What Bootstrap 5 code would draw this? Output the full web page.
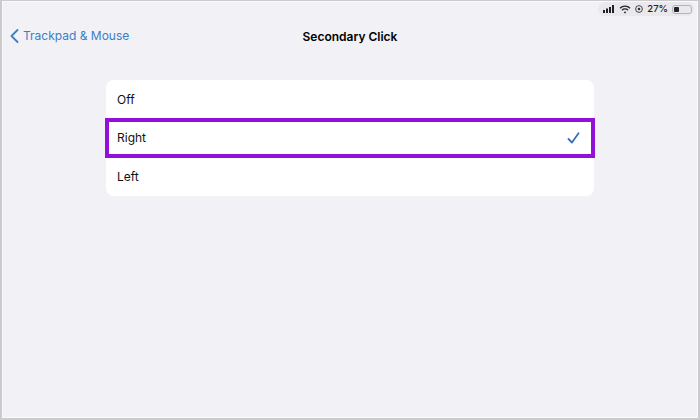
<!DOCTYPE html>
<html lang="en">
<head>
    <meta charset="UTF-8">
    <meta name="viewport" content="width=device-width, initial-scale=1.0">
    <title>Secondary Click</title>
    <link rel="stylesheet" href="https://cdn.jsdelivr.net/npm/bootstrap@5.3.0/dist/css/bootstrap.min.css">
    <style>
        html, body {
            height: 100%;
            overflow: hidden;
        }

        body {
            background: #f2f1f6;
            color: #000;
            font-family: Inter, "Liberation Sans", sans-serif;
            border: solid #cbcbcd;
            border-width: 1px 2px 2px 2px;
            box-shadow: inset 0 0 0 1px #f9f8fb;
        }

        .status-row {
            height: 15px;
            padding-right: 4px;
            font-size: 9.5px;
            font-weight: 500;
            color: #222;
        }

        .status-pill {
            background: #e9e8ec;
            border-radius: 7px;
            height: 14px;
            padding: 0 2px 0 4px;
            gap: 4px;
        }

        .top-row {
            height: 41px;
            padding: 0 8px;
        }

        .top-row > div {
            flex: 1 1 0;
        }

        .back-link {
            color: #3b7fc4;
            font-size: 12px;
            text-decoration: none;
        }

        .page-title {
            font-size: 12px;
            font-weight: 600;
        }

        .choice-list {
            width: 488px;
            margin: 23px auto 0;
            border-radius: 8px;
        }

        .choice-list .list-group-item {
            height: 38.5px;
            padding: 1px 11px 0;
            font-size: 12px;
            color: #111;
            border: 0;
            display: flex;
            align-items: center;
            justify-content: space-between;
        }

        .choice-list .picked-row {
            outline: 4px solid #9310d8;
            outline-offset: -3px;
            z-index: 1;
            padding-right: 14px;
        }

        .batt-box {
            width: 20px;
            height: 9px;
            border: 1px solid #b5b5b8;
            border-radius: 3px;
            padding: 1px;
        }

        .batt-fill {
            width: 30%;
            height: 100%;
            background: #222;
            border-radius: 1px;
        }
    </style>
</head>
<body>
    <div class="status-row d-flex justify-content-end align-items-end">
        <div class="status-pill d-flex align-items-center">
            <svg width="13" height="8" viewBox="0 0 13 8"><rect x="1" y="5" width="2" height="3" fill="#222"/><rect x="4" y="3.5" width="2" height="4.5" fill="#222"/><rect x="7" y="2" width="2" height="6" fill="#222"/><rect x="10" y="0" width="2" height="8" fill="#222"/></svg>
            <svg width="12" height="9" viewBox="0 0 12 9" fill="none" stroke="#222" stroke-width="1.3"><path d="M1 3.2a7 7 0 0 1 10 0"/><path d="M3 5.2a4.2 4.2 0 0 1 6 0"/><path d="M6 8.6 4.8 7.2a1.7 1.7 0 0 1 2.4 0z" fill="#222" stroke="none"/></svg>
            <svg width="8" height="8" viewBox="0 0 8 8" fill="none" stroke="#333"><circle cx="4" cy="4" r="3.4" stroke-width=".9"/><circle cx="4" cy="4" r="1.3" fill="#333" stroke="none"/></svg>
            <span>27%</span>
            <div class="batt-box"><div class="batt-fill"></div></div>
        </div>
    </div>

    <div class="top-row d-flex align-items-center">
        <div>
            <a href="#" class="back-link d-inline-flex align-items-center gap-1">
                <svg width="9" height="14" viewBox="0 0 9 14" fill="none" stroke="#3b7fc4" stroke-width="1.8" stroke-linecap="round" stroke-linejoin="round"><path d="M7.5 1 1.5 7l6 6"/></svg>
                Trackpad &amp; Mouse
            </a>
        </div>
        <div class="page-title text-center">Secondary Click</div>
        <div></div>
    </div>

    <ul class="list-group choice-list">
        <li class="list-group-item">Off</li>
        <li class="list-group-item picked-row">
            Right
            <svg width="13" height="12" viewBox="0 0 13 12" fill="none" stroke="#3b6fb8" stroke-width="1.8" stroke-linecap="round" stroke-linejoin="round"><path d="M1.5 7 5 10.5 11.5 1.2"/></svg>
        </li>
        <li class="list-group-item">Left</li>
    </ul>

    <script src="https://cdn.jsdelivr.net/npm/bootstrap@5.3.0/dist/js/bootstrap.bundle.min.js"></script>
</body>
</html>
